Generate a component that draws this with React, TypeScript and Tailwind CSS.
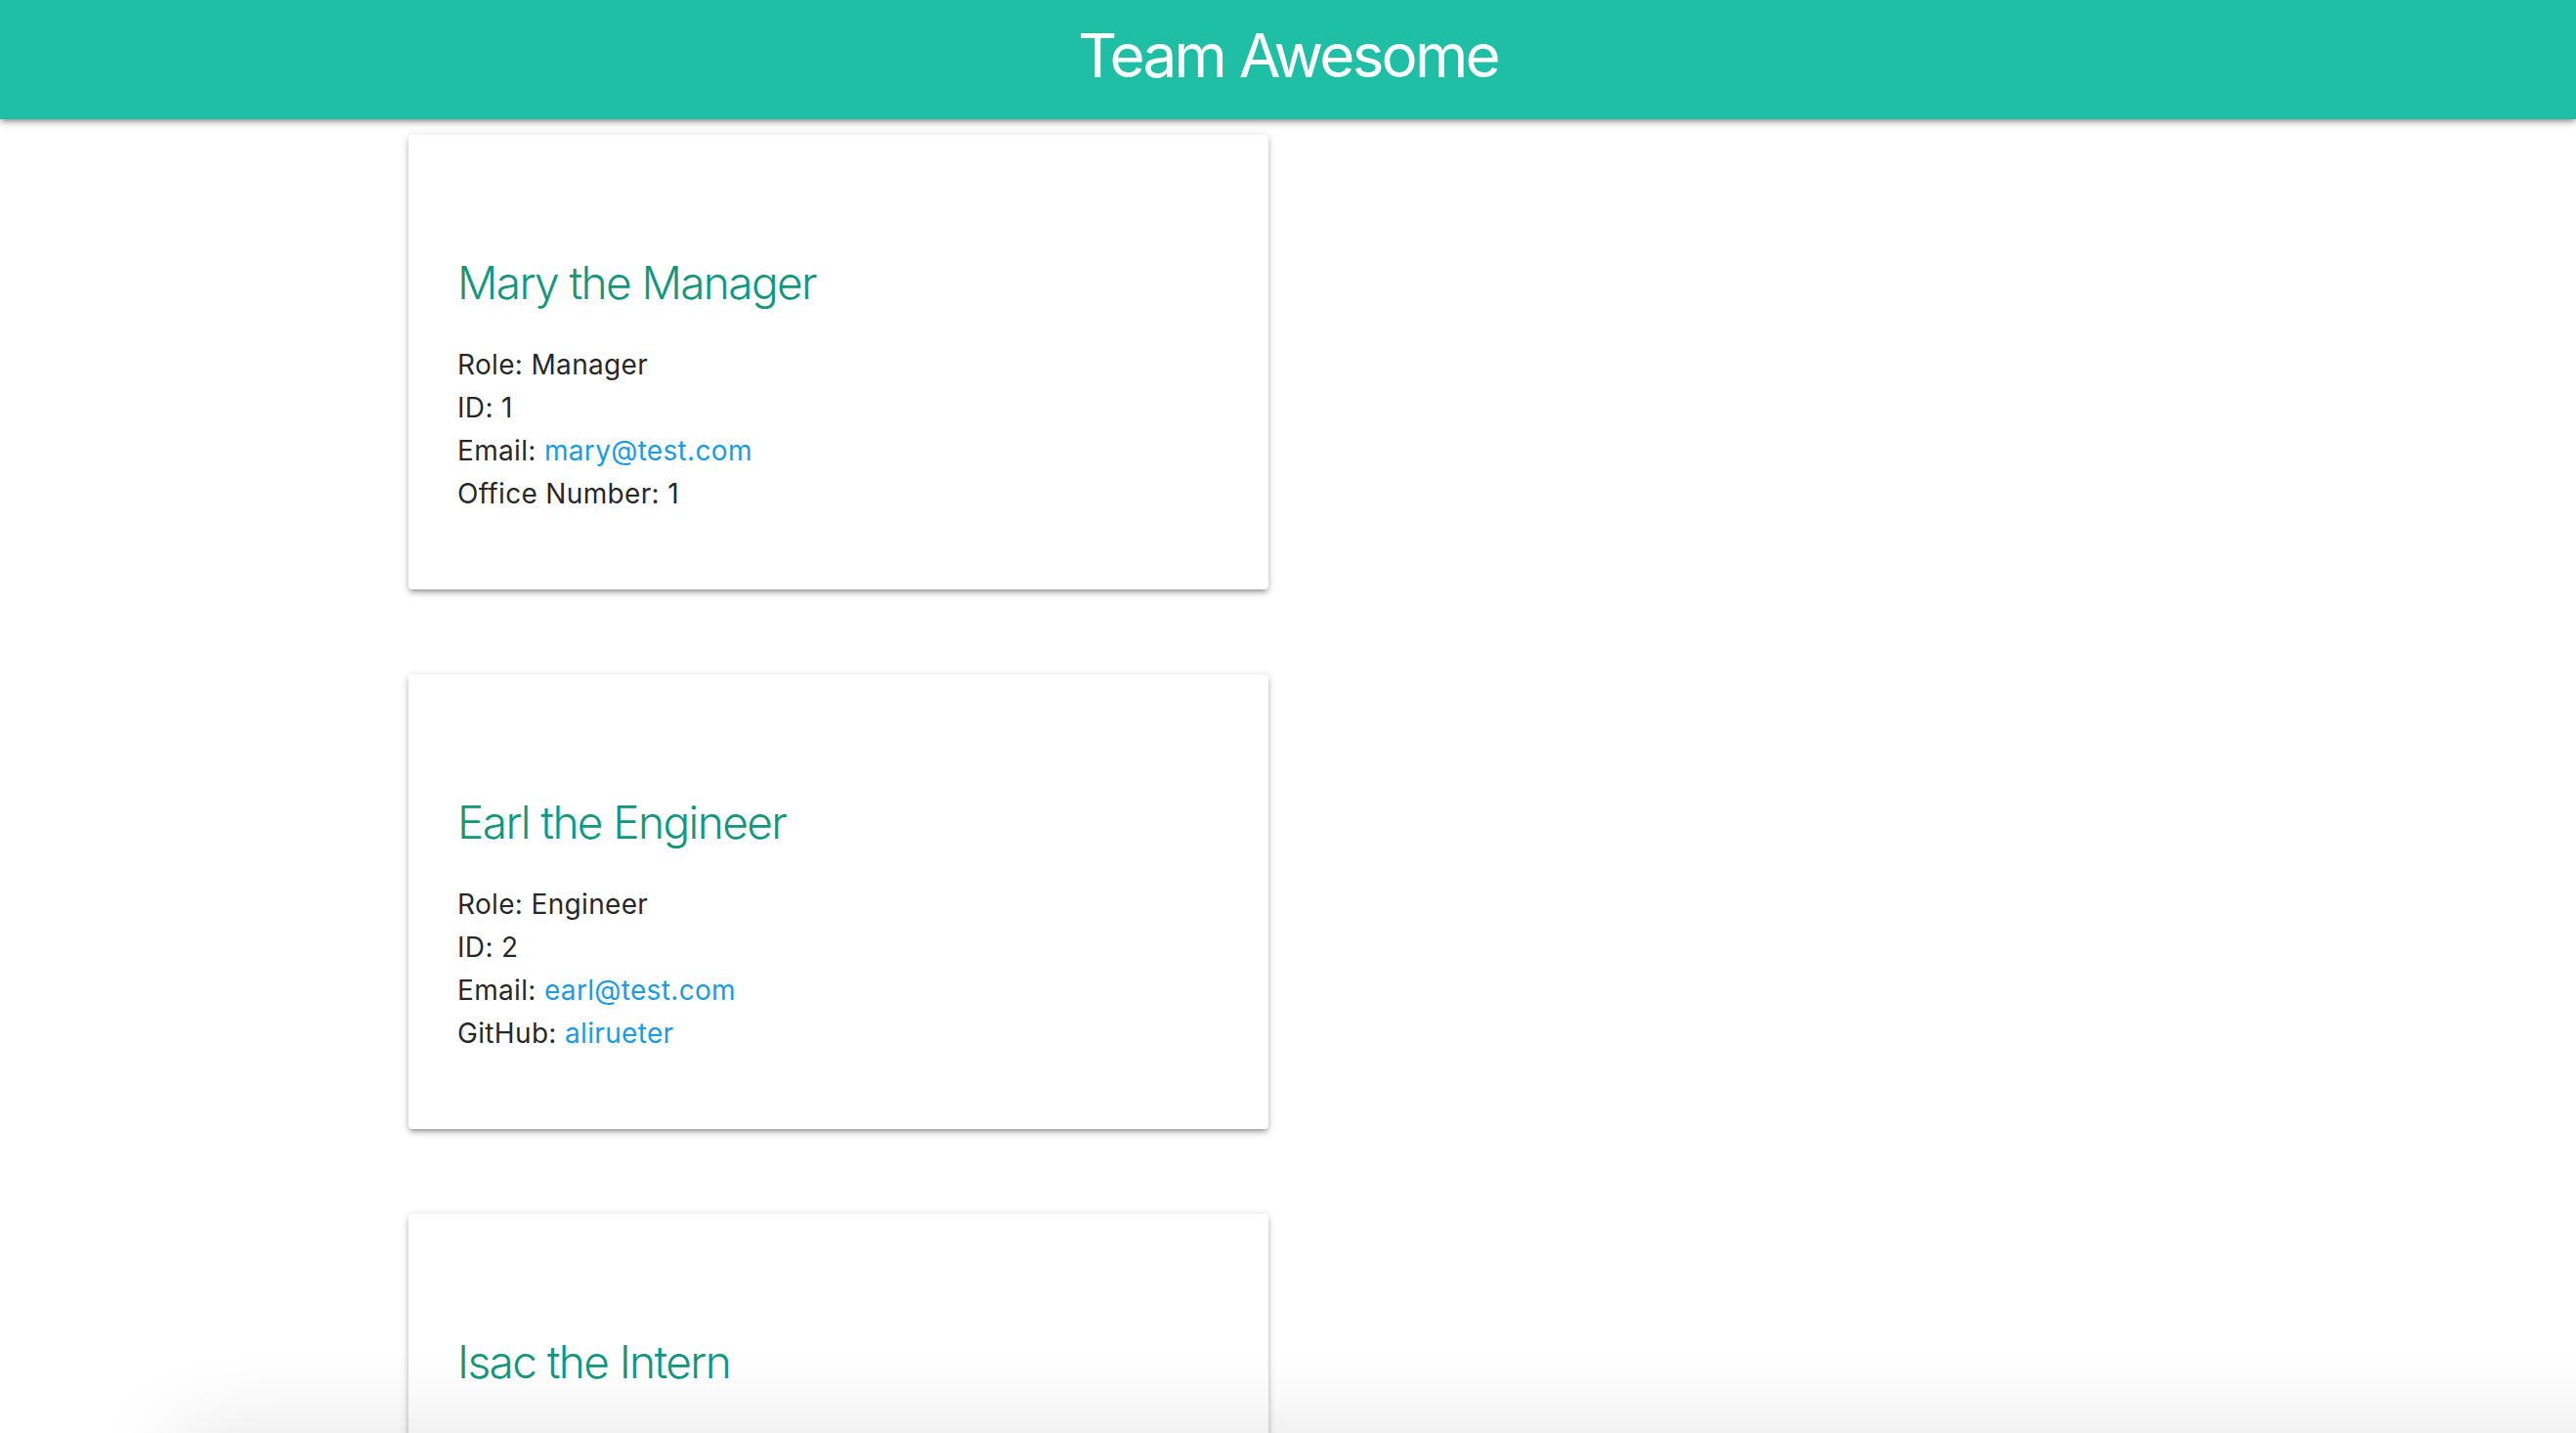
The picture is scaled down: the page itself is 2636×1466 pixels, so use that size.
import React from "react";

type Emp = {
  name: string;
  role: string;
  id: number;
  email: string;
  extraLabel: string;
  extraValue: string;
  extraLink?: boolean;
};

const team: Emp[] = [
  { name: "Mary the Manager", role: "Manager", id: 1, email: "mary@test.com", extraLabel: "Office Number", extraValue: "1" },
  { name: "Earl the Engineer", role: "Engineer", id: 2, email: "earl@test.com", extraLabel: "GitHub", extraValue: "alirueter", extraLink: true },
  { name: "Isac the Intern", role: "Intern", id: 3, email: "isac@test.com", extraLabel: "School", extraValue: "UCLA" },
];

function Card({ e }: { e: Emp }) {
  return (
    <div className="w-[880px] h-[465px] bg-white rounded-[4px] shadow-[0_4px_4px_0_rgba(0,0,0,0.14),0_6px_2px_-4px_rgba(0,0,0,0.12),0_2px_10px_0_rgba(0,0,0,0.2)] pl-[50px] pt-[119px]">
      <div className="text-[46px] leading-[64px] font-light tracking-[-0.035em] text-[#12977f]">{e.name}</div>
      <div className="mt-[30px] text-[28px] leading-[44px] tracking-[0.012em] text-[rgba(0,0,0,0.87)]">
        <div>Role: {e.role}</div>
        <div>ID: {e.id}</div>
        <div>
          Email: <a className="text-[#1a9be5]">{e.email}</a>
        </div>
        <div>
          {e.extraLabel}:{" "}
          {e.extraLink ? <a className="text-[#1a9be5]">{e.extraValue}</a> : e.extraValue}
        </div>
      </div>
    </div>
  );
}

export default function App() {
  return (
    <div className="min-h-screen bg-white font-['Inter','Noto_Sans',sans-serif]">
      <header className="relative z-10 h-[122px] bg-[#1fbfa5] shadow-[0_4px_4px_0_rgba(0,0,0,0.14),0_6px_2px_-4px_rgba(0,0,0,0.12),0_2px_10px_0_rgba(0,0,0,0.2)] flex items-center justify-center pb-[8px]">
        <h1 className="text-white text-[62px] leading-[80px] font-normal tracking-[-0.045em]">Team Awesome</h1>
      </header>
      <main className="pl-[418px] pt-[16px] flex flex-col gap-[87px] pb-[100px]">
        {team.map((e) => (
          <Card key={e.id} e={e} />
        ))}
      </main>
      <div className="fixed left-[180px] right-[-200px] top-full h-[200px] bg-white shadow-[0_0_90px_0_rgba(0,0,0,0.11)]" />
    </div>
  );
}
